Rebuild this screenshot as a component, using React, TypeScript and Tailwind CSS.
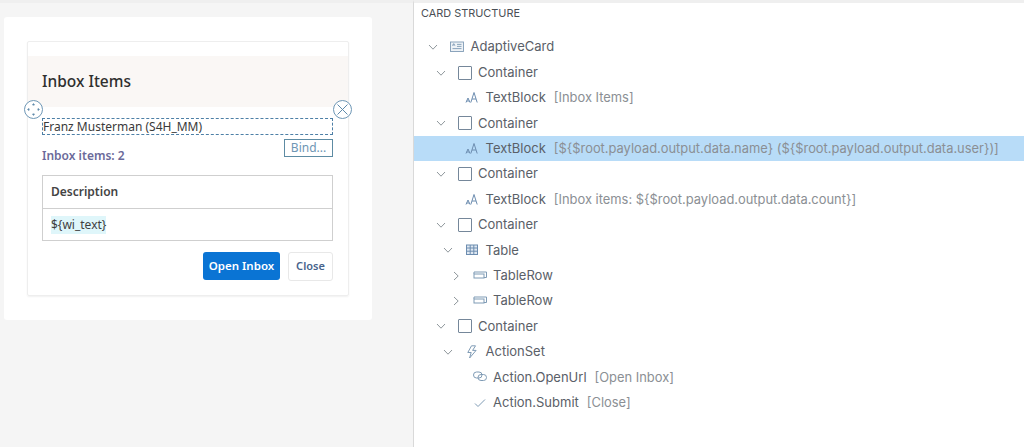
import React from "react";

const Chevron = ({ right }: { right?: boolean }) => (
  <svg width="10" height="10" viewBox="0 0 10 10" fill="none" stroke="#8f979c" strokeWidth="1" className="shrink-0">
    {right ? <path d="M3 1l4.2 4L3 9" /> : <path d="M1 3l4 4.2L9 3" />}
  </svg>
);

const icons: Record<string, React.ReactNode> = {
  card: (
    <svg width="14" height="14" viewBox="0 0 14 14" fill="none" stroke="#7f9bb5" strokeWidth="0.9">
      <rect x="0.5" y="2" width="13" height="9.5" fill="#eef2f6" />
      <path d="M2.5 5.6l1.2-2 1.2 2M2.8 5h1.8M7 4.4h4.5M7 6.4h4.5M2.5 8.6h9" />
    </svg>
  ),
  box: (
    <svg width="14" height="14" viewBox="0 0 14 14" fill="none" stroke="#75879a" strokeWidth="1">
      <rect x="0.5" y="0.5" width="13" height="13" rx="0.5" />
    </svg>
  ),
  text: (
    <svg width="14" height="14" viewBox="0 0 14 14" fill="none" stroke="#6d8db0" strokeWidth="1">
      <path d="M1 11.5l2-4.5 2 4.5M1.7 10h2.6M5.8 11.5L9 1.5l3.2 10M7 8h4" />
    </svg>
  ),
  table: (
    <svg width="12" height="12" viewBox="0 0 12 12" fill="none" stroke="#6d8db0" strokeWidth="1">
      <rect x="0.5" y="1" width="11" height="9.5" fill="#dfe8f2" />
      <path d="M0.5 4h11M0.5 7.2h11M4.2 1v9.5M7.8 1v9.5" />
    </svg>
  ),
  row: (
    <svg width="14" height="12" viewBox="0 0 14 12" fill="none" stroke="#7f9bb5" strokeWidth="1">
      <path d="M1 4V2h12.5v5.5H11" />
      <rect x="1" y="4" width="10" height="4" fill="#fff" />
    </svg>
  ),
  bolt: (
    <svg width="12" height="14" viewBox="0 0 12 14" fill="none" stroke="#7f9bb5" strokeWidth="1">
      <path d="M5.5 0.8L1.8 7.5h3.4L3.6 13l6.5-7.6H6.6l2.9-4.6z" />
    </svg>
  ),
  link: (
    <svg width="14" height="12" viewBox="0 0 14 12" fill="none" stroke="#7f9bb5" strokeWidth="1">
      <rect x="0.5" y="1" width="8.5" height="6" rx="3" />
      <rect x="5" y="3.5" width="8.5" height="6" rx="3" />
    </svg>
  ),
  check: (
    <svg width="12" height="10" viewBox="0 0 12 10" fill="none" stroke="#7f9bb5" strokeWidth="1">
      <path d="M1 5.5l3 3L11 1.5" />
    </svg>
  ),
};

type Row = { level: number; chev?: "down" | "right"; icon: string; name: string; note?: string; active?: boolean };

const rows: Row[] = [
  { level: 0, chev: "down", icon: "card", name: "AdaptiveCard" },
  { level: 1, chev: "down", icon: "box", name: "Container" },
  { level: 2, icon: "text", name: "TextBlock", note: "[Inbox Items]" },
  { level: 1, chev: "down", icon: "box", name: "Container" },
  { level: 2, icon: "text", name: "TextBlock", note: "[${$root.payload.output.data.name} (${$root.payload.output.data.user})]", active: true },
  { level: 1, chev: "down", icon: "box", name: "Container" },
  { level: 2, icon: "text", name: "TextBlock", note: "[Inbox items: ${$root.payload.output.data.count}]" },
  { level: 1, chev: "down", icon: "box", name: "Container" },
  { level: 2, chev: "down", icon: "table", name: "Table" },
  { level: 3, chev: "right", icon: "row", name: "TableRow" },
  { level: 3, chev: "right", icon: "row", name: "TableRow" },
  { level: 1, chev: "down", icon: "box", name: "Container" },
  { level: 2, chev: "down", icon: "bolt", name: "ActionSet" },
  { level: 3, icon: "link", name: "Action.OpenUrl", note: "[Open Inbox]" },
  { level: 3, icon: "check", name: "Action.Submit", note: "[Close]" },
];

function TreeRow({ r }: { r: Row }) {
  return (
    <div
      className={`flex h-[25.4px] items-center whitespace-nowrap text-[13px] ${r.active ? "bg-[#b8dcf8]" : ""}`}
      style={{ paddingLeft: 14 + r.level * 7.5 }}
    >
      <span className="flex w-[10px] shrink-0 justify-center">{r.chev && <Chevron right={r.chev === "right"} />}</span>
      <span className="ml-[12px] flex w-[14px] shrink-0 justify-center">{icons[r.icon]}</span>
      <span className="ml-[6.5px] text-[#5a6068]">{r.name}</span>
      {r.note && <span className="ml-[8px] text-[12.9px] text-[#8b8f94]">{r.note}</span>}
    </div>
  );
}

export default function App() {
  return (
    <div className="flex h-[447px] w-[1024px] overflow-hidden bg-white font-['Noto_Sans',sans-serif]">
      <div className="h-full w-[413px] shrink-0 border-t-[3px] border-[#efefef] bg-[#f5f5f5] pl-[4px] pr-[41px] pt-[14px]">
        <div className="h-[303px] rounded-[3px] bg-white pl-[23px] pr-[23px] pt-[24px]">
          <div className="relative h-[255px] rounded-[2px] border border-[#eeeeee] pt-[14px] shadow-[0_1px_2px_rgba(0,0,0,0.06)]">
            <div className="flex h-[51px] items-center bg-[#faf7f5] pl-[14px]">
              <span className="text-[15.5px] font-medium text-[#2f2f2f]">Inbox Items</span>
            </div>

            <div className="pl-[14px] pr-[15px] pt-[11px]">
              <div className="flex h-[17px] items-center border border-dashed border-[#4d7fa6] text-[12px] leading-none text-[#3a3a3a]">
                Franz Musterman (S4H_MM)
              </div>
              <div className="mt-[4px] flex h-[19px] items-start justify-between">
                <span className="mt-[8px] text-[12px] font-semibold leading-[18px] text-[#6b6a9a]">Inbox items: 2</span>
                <span className="flex h-[18px] w-[49px] items-center justify-center border border-[#5d8ba3] bg-white text-[12px] text-[#6f96b4]">
                  Bind...
                </span>
              </div>
              <div className="mt-[17px] border border-[#cfcfcf]">
                <div className="flex h-[33px] items-center border-b border-[#cfcfcf] pl-[8px] text-[12px] font-semibold text-[#444444]">
                  Description
                </div>
                <div className="flex h-[31px] items-center pl-[8px] text-[12px] text-[#3f3f3f]">
                  <span className="bg-[#dff6fa]">{"${wi_text}"}</span>
                </div>
              </div>
              <div className="mt-[11px] flex justify-end gap-[8px]">
                <button className="h-[28px] w-[77px] rounded-[3px] bg-[#0a74d4] text-[11.5px] font-semibold text-white">
                  Open Inbox
                </button>
                <button className="h-[29px] w-[45px] rounded-[3px] border border-[#e8e8e8] bg-white text-[11px] font-semibold text-[#47638c]">
                  Close
                </button>
              </div>
            </div>

            <span className="absolute left-[-4px] top-[58px] flex h-[19px] w-[19px] items-center justify-center rounded-full border border-[#6e97b6] bg-white">
              <svg width="13" height="13" viewBox="0 0 13 13" fill="none" stroke="#5f8aab" strokeWidth="1">
                <path d="M6.5 1v1.5M5.2 2l1.3-1.2L7.8 2M6.5 12v-1.5M5.2 11l1.3 1.2L7.8 11M1 6.5h1.5M2 5.2L.8 6.5 2 7.8M12 6.5h-1.5M11 5.2l1.2 1.3L11 7.8" />
              </svg>
            </span>
            <span className="absolute right-[-4px] top-[58px] flex h-[19px] w-[19px] items-center justify-center rounded-full border border-[#6e97b6] bg-white">
              <svg width="13" height="13" viewBox="0 0 13 13" fill="none" stroke="#5f8aab" strokeWidth="1">
                <path d="M1.5 1.5l10 10M11.5 1.5l-10 10" />
              </svg>
            </span>
          </div>
        </div>
      </div>

      <div className="h-full min-w-0 flex-1 border-l border-[#d9d9d9] border-t-[3px] border-t-[#efefef] bg-white font-['Inter',sans-serif]">
        <div className="h-[31.5px] pl-[7px] pt-[3px] text-[10.9px] leading-[15px] text-[#4a4f55]">CARD STRUCTURE</div>
        {rows.map((r, i) => (
          <TreeRow key={i} r={r} />
        ))}
      </div>
    </div>
  );
}
